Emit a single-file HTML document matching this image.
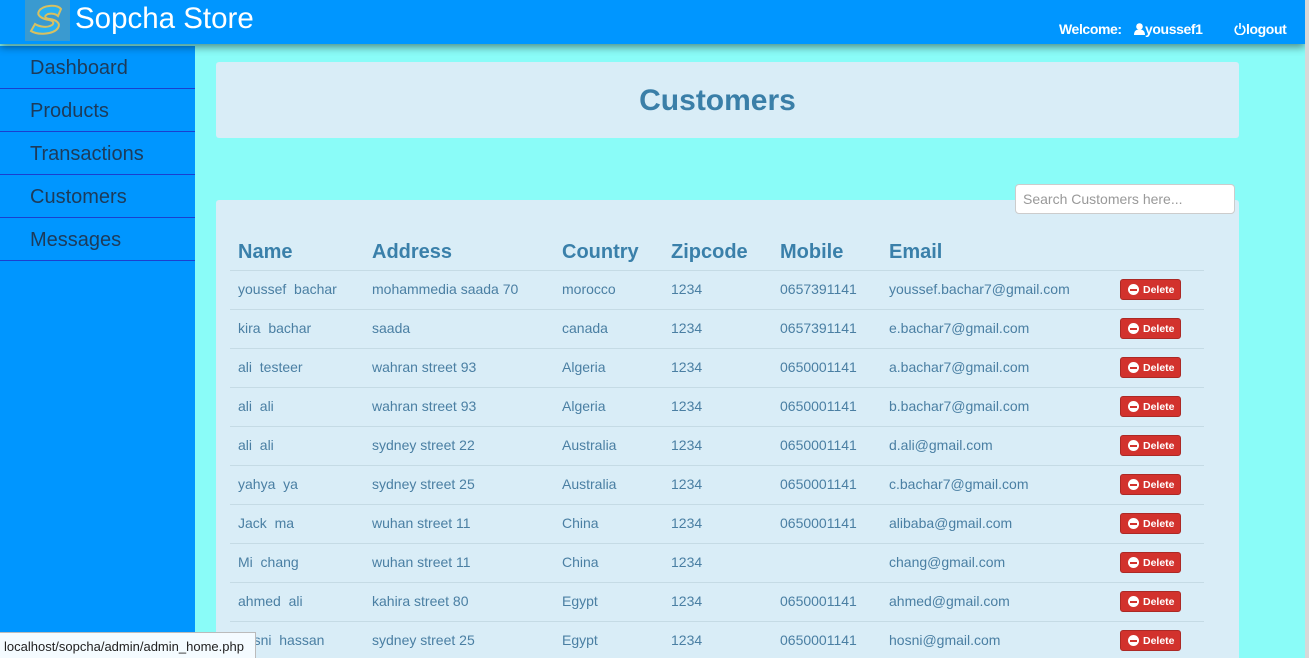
<!DOCTYPE html>
<html style="overflow:hidden;height:658px"><head><meta charset="utf-8"><style>
*{box-sizing:border-box;margin:0;padding:0}
body{width:1309px;height:658px;overflow:hidden;background:#8afcf8;font-family:"Liberation Sans",Arial,sans-serif;position:relative}
.hdr{position:absolute;left:0;top:0;width:1305px;height:44px;background:#0096ff;box-shadow:0 3px 8px rgba(0,0,0,.45);z-index:3}
.sb{position:absolute;right:0;top:0;width:4px;height:658px;background:#d8d8d8;z-index:4}
.logo{position:absolute;left:25px;top:0;width:45px;height:41px;background:#3a9ad0}
.brand{position:absolute;left:75px;top:2px;color:#fff;font-size:29.5px}
.nav{position:absolute;top:21px;color:#fff;font-size:14px;font-weight:bold;letter-spacing:-.4px}
.side{position:absolute;left:0;top:46px;width:195px;height:612px;background:#0096ff}
.side div{height:43px;border-bottom:1px solid #1a3fd0;padding:11px 0 0 30px;font-size:20px;color:#1d3b5a}
.p1{position:absolute;left:216px;top:62px;width:1023px;height:76px;background:#d9edf7;border-radius:3px;text-align:center;color:#3a7fa8;font-size:30px;font-weight:bold;padding:22px 20px 0 0}
.p2{position:absolute;left:216px;top:200px;width:1023px;height:458px;background:#d9edf7;border-radius:3px 3px 0 0}
.srch{position:absolute;left:1015px;top:184px;width:220px;height:30px;background:#fff;border:1px solid #ccc;border-radius:4px;color:#999;font-size:14px;padding:6px 0 0 7px;z-index:2}
.c{position:absolute;color:#4a7fa3;font-size:14px;white-space:nowrap}
.h{font-size:20px;font-weight:bold;top:241px;color:#3a80aa}
.ln{position:absolute;left:230px;width:974px;height:1px;background:#c5dbe5}
.btn{position:absolute;left:1120px;width:61px;height:21px;background:#d2322d;border:1px solid #ac2925;border-radius:3px;color:#fff;font-size:10.5px;font-weight:bold;padding:4px 0 0 22px}
.btn:before{content:"";position:absolute;left:7px;top:4px;width:11px;height:11px;border-radius:50%;background:#fff}
.btn:after{content:"";position:absolute;left:9px;top:9px;width:7px;height:2px;background:#d2322d}
.stat{position:absolute;left:0;top:632px;width:256px;height:26px;background:#f4fbff;border:1px solid #bbb;border-left:none;border-bottom:none;font-size:13px;color:#222;padding:6px 0 0 4px;z-index:5}
</style></head><body>
<div class="hdr">
<div class="logo"><svg width="45" height="41"><path d="M36 9c-4-5-18-4-22 2-3 5 4 8 10 9 5 1 6 4 1 6-5 2-12 0-15-2l-4 7c6 4 22 4 27-3 3-5-2-8-8-9-6-1-6-3-2-5 4-1 8 0 10 2z" fill="#2ab0f0" stroke="#d8c060" stroke-width="2"/></svg></div>
<div class="brand">Sopcha Store</div>
<div class="nav" style="left:1059px">Welcome:</div>
<div class="nav" style="left:1134px"><svg width="11" height="12" style="vertical-align:-1px"><circle cx="5.5" cy="3.5" r="3.3" fill="#fff"/><path d="M0 12c0-4 2-5.5 5.5-5.5S11 8 11 12z" fill="#fff"/></svg>youssef1</div>
<div class="nav" style="left:1234px"><svg width="12" height="12" style="vertical-align:-1px"><path d="M3.5 2.8A4.8 4.8 0 1 0 8.5 2.8" fill="none" stroke="#fff" stroke-width="1.6"/><path d="M6 0v6" stroke="#fff" stroke-width="1.6"/></svg>logout</div>
</div>
<div class="sb"></div>
<div class="side"><div>Dashboard</div><div>Products</div><div>Transactions</div><div>Customers</div><div>Messages</div></div>
<div class="p1">Customers</div>
<div class="p2"></div>
<div class="srch">Search Customers here...</div>
<div class="c h" style="left:238px">Name</div>
<div class="c h" style="left:372px">Address</div>
<div class="c h" style="left:562px">Country</div>
<div class="c h" style="left:671px">Zipcode</div>
<div class="c h" style="left:780px">Mobile</div>
<div class="c h" style="left:889px">Email</div>
<div id="rows"></div>
<script>
var d=[["youssef&nbsp; bachar","mohammedia saada 70","morocco","0657391141","youssef.bachar7@gmail.com"],
["kira&nbsp; bachar","saada","canada","0657391141","e.bachar7@gmail.com"],
["ali&nbsp; testeer","wahran street 93","Algeria","0650001141","a.bachar7@gmail.com"],
["ali&nbsp; ali","wahran street 93","Algeria","0650001141","b.bachar7@gmail.com"],
["ali&nbsp; ali","sydney street 22","Australia","0650001141","d.ali@gmail.com"],
["yahya&nbsp; ya","sydney street 25","Australia","0650001141","c.bachar7@gmail.com"],
["Jack&nbsp; ma","wuhan street 11","China","0650001141","alibaba@gmail.com"],
["Mi&nbsp; chang","wuhan street 11","China","","chang@gmail.com"],
["ahmed&nbsp; ali","kahira street 80","Egypt","0650001141","ahmed@gmail.com"],
["hosni&nbsp; hassan","sydney street 25","Egypt","0650001141","hosni@gmail.com"]];
var h="";d.forEach(function(r,i){var y=270+i*39;h+='<div class="ln" style="top:'+y+'px"></div>';var t=y+11;
h+='<div class="c" style="left:238px;top:'+t+'px">'+r[0]+'</div><div class="c" style="left:372px;top:'+t+'px">'+r[1]+'</div><div class="c" style="left:562px;top:'+t+'px">'+r[2]+'</div><div class="c" style="left:671px;top:'+t+'px">1234</div><div class="c" style="left:780px;top:'+t+'px">'+r[3]+'</div><div class="c" style="left:889px;top:'+t+'px">'+r[4]+'</div><div class="btn" style="top:'+(y+9)+'px">Delete</div>';});
document.getElementById("rows").innerHTML=h;
</script>
<div class="stat">localhost/sopcha/admin/admin_home.php</div>
</body></html>
